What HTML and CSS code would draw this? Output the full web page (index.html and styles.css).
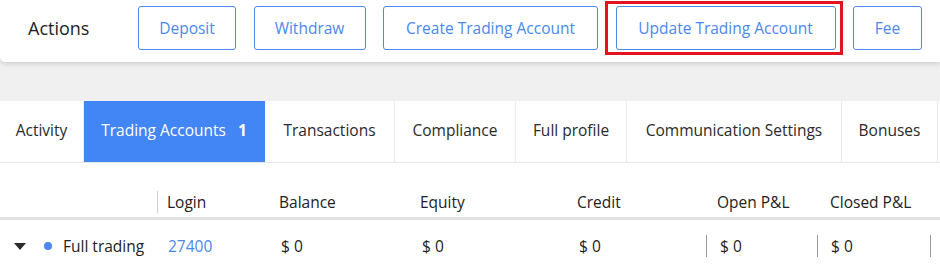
FILE: index.html
```html
<!DOCTYPE html>
<html>
<head>
<meta charset="utf-8">
<link rel="stylesheet" href="styles.css">
</head>
<body>
<div class="page">
  <header class="actions">
    <div class="actions-label">Actions</div>
    <div class="actions-buttons">
      <button class="btn btn-deposit">Deposit</button>
      <button class="btn btn-withdraw">Withdraw</button>
      <button class="btn btn-create">Create Trading Account</button>
      <div class="highlight-wrap">
        <button class="btn btn-update">Update Trading Account</button>
        <span class="highlight"></span>
      </div>
      <button class="btn btn-fee">Fee</button>
    </div>
  </header>
  <div class="gap"></div>
  <section class="panel">
    <nav class="tabs">
      <div class="tab tab-activity">Activity</div>
      <div class="tab tab-active">Trading Accounts <b class="count">1</b></div>
      <div class="tab tab-tx">Transactions</div>
      <div class="tab tab-comp">Compliance</div>
      <div class="tab tab-prof">Full profile</div>
      <div class="tab tab-comm">Communication Settings</div>
      <div class="tab tab-bon">Bonuses</div>
    </nav>
    <div class="table">
      <div class="row head">
        <div class="cell"></div>
        <div class="cell sep">Login</div>
        <div class="cell">Balance</div>
        <div class="cell">Equity</div>
        <div class="cell">Credit</div>
        <div class="cell pl-open">Open P&amp;L</div>
        <div class="cell pl-closed">Closed P&amp;L</div>
        <div class="cell"></div>
      </div>
      <div class="row data">
        <div class="cell first"><span class="caret"></span><span class="dot"></span>Full trading</div>
        <div class="cell"><a class="link">27400</a></div>
        <div class="cell">$ 0</div>
        <div class="cell">$ 0</div>
        <div class="cell">$ 0</div>
        <div class="cell vsep">$ 0</div>
        <div class="cell vsep">$ 0</div>
        <div class="cell vsep"></div>
      </div>
    </div>
  </section>
</div>
</body>
</html>
```

FILE: styles.css
```css
* { box-sizing: border-box; }
html, body { margin: 0; padding: 0; }
body {
  width: 940px;
  height: 268px;
  overflow: hidden;
  background: #f0f0f0;
  font-family: "Open Sans", "Noto Sans", sans-serif;
  color: #222;
}
.page { width: 940px; }
.actions {
  height: 62px;
  background: #fff;
  display: flex;
  align-items: flex-start;
  padding-left: 28px;
  padding-top: 6px;
  border-bottom-left-radius: 5px;
  box-shadow: 0 2px 5px rgba(0,0,0,0.14);
  position: relative;
  z-index: 1;
}
.actions-label {
  width: 110px;
  height: 44px;
  line-height: 44px;
  font-size: 18px;
  color: #1e1e1e;
}
.actions-buttons {
  display: flex;
  gap: 17.5px;
}
.btn {
  height: 44px;
  padding: 0;
  text-align: center;
  border: 1px solid #4a88f0;
  border-radius: 3px;
  background: #fff;
  color: #4a88f0;
  font-family: "Open Sans", "Noto Sans", sans-serif;
  font-size: 15.5px;
  cursor: pointer;
}
.btn-deposit { width: 98px; }
.btn-withdraw { width: 112px; }
.btn-create { width: 215px; }
.btn-update { width: 220px; }
.btn-fee { width: 69px; }
.highlight-wrap { position: relative; display: flex; }
.highlight {
  position: absolute;
  left: -11px;
  right: -7px;
  top: -5px;
  bottom: -5px;
  border: 3px solid #e3141f;
  pointer-events: none;
}
.gap { height: 39px; }
.panel {
  background: #fff;
  height: 167px;
}
.tabs {
  display: flex;
  height: 62px;
  border-bottom: 1px solid #e8e8e8;
}
.tab {
  height: 61px;
  line-height: 59px;
  font-size: 15.5px;
  color: #2a2a2a;
  text-align: center;
  border-right: 1px solid #ebebeb;
}
.tab-activity { width: 84px; }
.tab-active {
  width: 181px;
  background: #4285f4;
  color: #fff;
  border-right-color: #4285f4;
}
.count { margin-left: 8px; font-weight: 700; }
.tab-tx { width: 130px; }
.tab-comp { width: 121px; }
.tab-prof { width: 111px; }
.tab-comm { width: 215px; }
.tab-bon { width: 96px; }
.row {
  display: grid;
  grid-template-columns: 157px 113px 141px 157px 138px 111px 113px 1fr;
}
.head {
  height: 57px;
  padding-top: 28px;
  border-bottom: 3px solid #e0e0e0;
  font-size: 15.5px;
}
.head .cell {
  height: 22px;
  line-height: 22px;
  padding-left: 9px;
}
.head .pl-open { padding-left: 11px; }
.head .pl-closed { padding-left: 13px; }
.head .sep { border-left: 1px solid #d0d0d0; }
.data {
  padding-top: 15px;
  font-size: 15.5px;
}
.data .cell {
  height: 22px;
  line-height: 22px;
  padding-left: 11px;
  display: flex;
  align-items: center;
}
.data .vsep { border-left: 1.5px solid #9a9a9a; padding-left: 13px; }
.data .first { padding-left: 14px; }
.caret {
  width: 0;
  height: 0;
  border-left: 6px solid transparent;
  border-right: 6px solid transparent;
  border-top: 7px solid #2a2a2a;
  margin-right: 18px;
}
.dot {
  width: 8px;
  height: 8px;
  border-radius: 50%;
  background: #4a88f0;
  margin-right: 11px;
}
.link { color: #4a88f0; text-decoration: none; }
```
